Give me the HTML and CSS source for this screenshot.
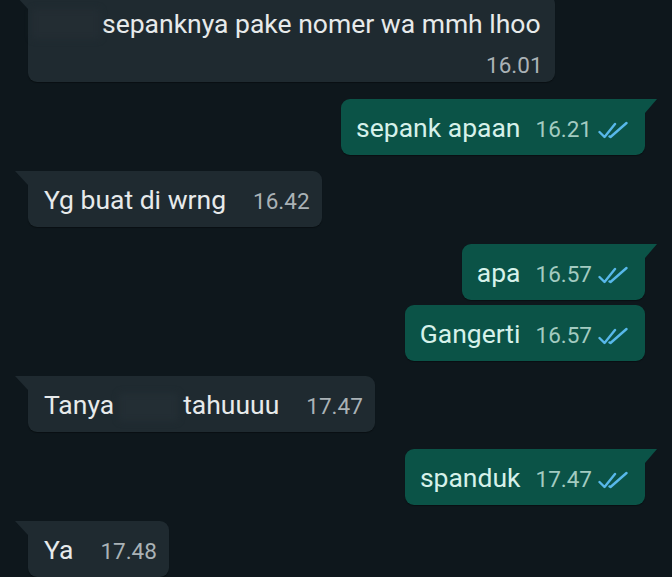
FILE: index.html
```html
<!DOCTYPE html>
<html lang="id">
<head>
<meta charset="utf-8">
<title>Chat</title>
<link rel="stylesheet" href="styles.css">
</head>
<body>
<div class="chat">
  <div class="msg in tail first">
    <div class="bubble stacked">
      <div class="line"><span class="blur blur-name"></span><span class="text">sepanknya pake nomer wa mmh lhoo</span></div>
      <span class="meta"><span class="time">16.01</span></span>
    </div>
  </div>

  <div class="msg out tail gap-xl">
    <div class="bubble">
      <span class="text">sepank apaan</span>
      <span class="meta"><span class="time">16.21</span><svg class="ticks" viewBox="0 0 30 20" aria-hidden="true"><path d="M1.5 11 L6.5 16 L17 3" /><path d="M11.5 15.5 L12.5 16 L28.5 2" /></svg></span>
    </div>
  </div>

  <div class="msg in tail gap-lg">
    <div class="bubble">
      <span class="text">Yg buat di wrng</span>
      <span class="meta"><span class="time">16.42</span></span>
    </div>
  </div>

  <div class="msg out tail gap-xl">
    <div class="bubble">
      <span class="text">apa</span>
      <span class="meta"><span class="time">16.57</span><svg class="ticks" viewBox="0 0 30 20" aria-hidden="true"><path d="M1.5 11 L6.5 16 L17 3" /><path d="M11.5 15.5 L12.5 16 L28.5 2" /></svg></span>
    </div>
  </div>

  <div class="msg out gap-sm">
    <div class="bubble">
      <span class="text">Gangerti</span>
      <span class="meta"><span class="time">16.57</span><svg class="ticks" viewBox="0 0 30 20" aria-hidden="true"><path d="M1.5 11 L6.5 16 L17 3" /><path d="M11.5 15.5 L12.5 16 L28.5 2" /></svg></span>
    </div>
  </div>

  <div class="msg in tail gap-md">
    <div class="bubble">
      <span class="text">Tanya<span class="blur blur-word"></span>tahuuuu</span>
      <span class="meta"><span class="time">17.47</span></span>
    </div>
  </div>

  <div class="msg out tail gap-xl">
    <div class="bubble">
      <span class="text">spanduk</span>
      <span class="meta"><span class="time">17.47</span><svg class="ticks" viewBox="0 0 30 20" aria-hidden="true"><path d="M1.5 11 L6.5 16 L17 3" /><path d="M11.5 15.5 L12.5 16 L28.5 2" /></svg></span>
    </div>
  </div>

  <div class="msg in tail gap-lg">
    <div class="bubble">
      <span class="text">Ya</span>
      <span class="meta"><span class="time">17.48</span></span>
    </div>
  </div>
</div>
</body>
</html>
```

FILE: styles.css
```css
html, body {
  margin: 0;
  padding: 0;
  background: #0e171c;
  height: 100%;
  overflow: hidden;
}

.chat {
  display: flex;
  flex-direction: column;
  padding: 0 27px 0 28px;
  margin-top: -5px;
  font-family: Roboto, "Noto Sans", "Liberation Sans", sans-serif;
}

.msg {
  display: flex;
}

.msg.in { justify-content: flex-start; }
.msg.out { justify-content: flex-end; }

.gap-sm { margin-top: 5px; }
.gap-md { margin-top: 15px; }
.gap-lg { margin-top: 16px; }
.gap-xl { margin-top: 17px; }

.bubble {
  position: relative;
  display: flex;
  align-items: baseline;
  height: 56px;
  box-sizing: border-box;
  padding: 14px 12px 0 16px;
  border-radius: 9px;
  background: #1f2a30;
  box-shadow: 0 1px 1px rgba(0, 0, 0, 0.35);
}

.msg.out .bubble {
  background: #0b5347;
  padding: 14px 17px 0 15px;
}

.msg.in.tail .bubble { border-top-left-radius: 0; }
.msg.out.tail .bubble { border-top-right-radius: 0; }

.msg.in.tail .bubble::before {
  content: "";
  position: absolute;
  top: 0;
  left: -13px;
  width: 13px;
  height: 14px;
  background: #1f2a30;
  clip-path: polygon(0 0, 100% 0, 100% 100%);
}

.msg.out.tail .bubble::after {
  content: "";
  position: absolute;
  top: 0;
  right: -12px;
  width: 12px;
  height: 14px;
  background: #0b5347;
  clip-path: polygon(0 0, 100% 0, 0 100%);
}

.text {
  font-size: 26.5px;
  line-height: 30px;
  color: #e7eaeb;
  white-space: nowrap;
}

.msg.out .text { color: #d6f1ea; }

.meta {
  display: flex;
  align-items: baseline;
  margin-left: 27px;
}

.msg.out .meta { margin-left: 15px; }

.time {
  font-size: 22.5px;
  line-height: 24px;
  color: #aab2b6;
}

.msg.out .time { color: #a3cbc1; }

.ticks {
  width: 30px;
  height: 20px;
  margin-left: 6px;
  align-self: center;
  position: relative;
  top: 2px;
  fill: none;
  stroke: #58b8ea;
  stroke-width: 2.4;
  stroke-linecap: round;
  stroke-linejoin: round;
}

.blur {
  display: inline-block;
  vertical-align: middle;
  background: #232d33;
  border-radius: 3px;
  filter: blur(3px);
}

.blur-name {
  width: 68px;
  height: 30px;
  margin-left: -12px;
  margin-right: 2px;
}

.blur-word {
  width: 59px;
  height: 28px;
  margin: 0 5px;
  background: #232e34;
}

/* first bubble: two-line layout */
.bubble.stacked {
  height: 87px;
  flex-direction: column;
  align-items: flex-end;
  padding: 14px 14px 0 16px;
}

.bubble.stacked .line {
  display: flex;
  align-items: center;
}

.bubble.stacked .meta {
  margin-left: 0;
  margin-top: 14px;
  margin-right: -2px;
}
```
